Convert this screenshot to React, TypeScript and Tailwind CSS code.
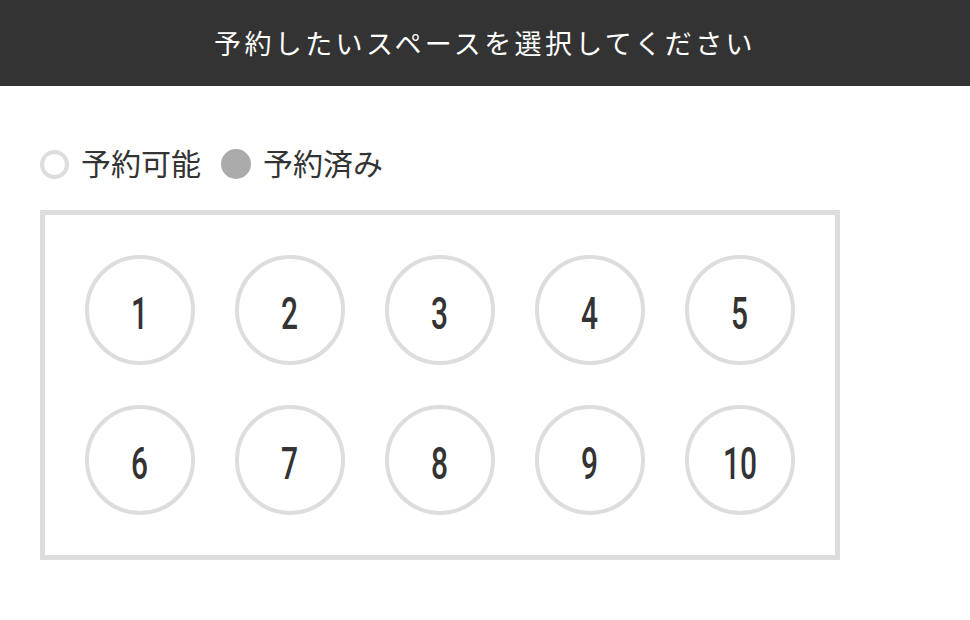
const spaces = [1, 2, 3, 4, 5, 6, 7, 8, 9, 10];

export default function App() {
  return (
    <div className="min-h-screen bg-white font-['Noto_Sans_CJK_JP',sans-serif] text-[#333]">
      {/* header */}
      <div className="flex h-[86px] items-center justify-center bg-[#333]">
        <h1 className="text-[27px] font-normal tracking-[0.125em] text-white">
          予約したいスペースを選択してください
        </h1>
      </div>

      <div className="px-10">
        {/* legend */}
        <div className="mt-[54px] flex h-[44px] items-center">
          <span className="mt-1 h-[29px] w-[29px] rounded-full border-4 border-[#ddd]" />
          <span className="ml-3 text-[30px] leading-none">予約可能</span>
          <span className="ml-5 mt-1 h-[30px] w-[30px] rounded-full bg-[#aaa]" />
          <span className="ml-3 text-[30px] leading-none">予約済み</span>
        </div>

        {/* spaces */}
        <div className="mt-[26px] w-[800px] border-[5px] border-[#ddd] p-10">
          <div className="grid w-[710px] grid-cols-5 gap-10">
            {spaces.map((n) => (
              <button
                key={n}
                className="flex h-[110px] w-[110px] items-center justify-center rounded-full border-4 border-[#ddd] bg-white"
              >
                <span className="inline-block scale-x-[0.68] pt-2 font-['Roboto',sans-serif] text-[44px] font-medium leading-none text-[#333]">
                  {n}
                </span>
              </button>
            ))}
          </div>
        </div>
      </div>
    </div>
  );
}
